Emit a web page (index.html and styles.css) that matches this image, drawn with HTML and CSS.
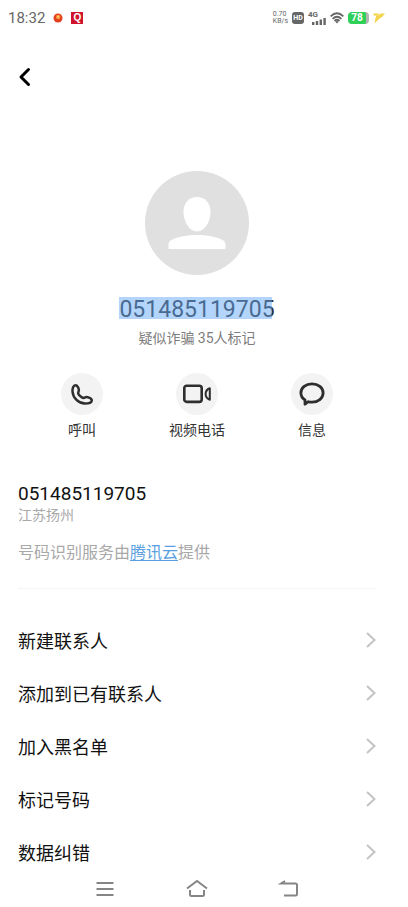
FILE: index.html
```html
<!DOCTYPE html>
<html lang="zh-CN">
<head>
<meta charset="utf-8">
<meta name="viewport" content="width=device-width, initial-scale=1">
<title>联系人详情</title>
<link rel="stylesheet" href="styles.css">
</head>
<body>
<header class="status">
  <div class="status-side">
    <time class="clock">18:32</time>
    <svg class="dot" width="10" height="10" viewBox="0 0 10 10" aria-hidden="true"><circle cx="5" cy="5" r="4.500" fill="#e2401f"/><circle cx="5.200" cy="4" r="2.200" fill="#f79a3b"/><circle cx="5" cy="3.800" r="1" fill="#ffd36b"/></svg>
    <span class="badge">Q</span>
  </div>
  <div class="status-side status-right">
    <span class="speed"><span>0.70</span><span>KB/s</span></span>
    <span class="hd">HD</span>
    <span class="cell"><span>4G</span>
      <svg width="14" height="7" viewBox="0 0 14 7" aria-hidden="true"><path d="M0 4h2.400v3H0zM3.800 3h2.400v4H3.800zM7.600 1.500H10V7H7.600zM11.400 0h2.400v7h-2.400z" fill="#666"/></svg>
    </span>
    <svg class="wifi" width="14" height="12" viewBox="0 0 14 12" aria-hidden="true"><g fill="none" stroke="#666" stroke-width="1.800"><path d="M.6 4.300Q7-1.800 13.400 4.300"/><path d="M2.600 6.800Q7 2.600 11.400 6.800"/><path d="M4.500 9Q7 6.600 9.500 9"/></g><path d="M5.300 9.700Q7 8.300 8.700 9.700L7 11.600z" fill="#666"/></svg>
    <span class="battery">78</span>
    <svg width="12" height="12" viewBox="0 0 12 12" aria-hidden="true"><path d="M.5 1.500h5.500L4.500 4 7.500 1.500H12L9.500 4.500 6 7 1.500 11.500 2.500 6 3.500 3.500H.5z" fill="#f3d44a"/></svg>
  </div>
</header>

<main class="page">
  <button class="back" type="button" aria-label="返回">
    <svg width="14" height="20" viewBox="0 0 14 20"><path d="M10.500 2.500L3 10l7.500 7.500" fill="none" stroke="#000" stroke-width="3" stroke-linecap="round" stroke-linejoin="round"/></svg>
  </button>

  <section class="profile">
    <svg class="avatar" width="104" height="104" viewBox="0 0 104 104" aria-hidden="true"><circle cx="52" cy="52" r="52" fill="#e0e0e0"/><path d="M52 26c8 0 13.500 6 13.500 15S60 60.500 52 60.500 38.500 50 38.500 41 44 26 52 26z" fill="#fff"/><path d="M23.500 78v-4c0-2.500 1-4 3-5 7-3.200 15-5 25.500-5s18.500 1.800 25.500 5c2 1 3 2.500 3 5v4z" fill="#fff"/></svg>
    <h1 class="name">051485119705</h1>
    <p class="mark">疑似诈骗 35人标记</p>
  </section>

  <nav class="actions">
    <button class="action" type="button">
      <span class="disc"><svg width="26" height="26" viewBox="0 0 26 26"><path d="M6.500 4.200C4.300 4.200 3.300 7.500 3.500 10.500 4 17 9.500 22.500 16 22.500c3.500 0 6.800-1 6.800-3.300 0-1.200-1.300-2-2.800-2.600s-2.700-.8-3.800-.2-2.200.8-3.500-.2-2.500-2-3.200-3-.4-1.800.1-2.800.3-2.200-.3-3.600S8 4.200 6.500 4.200z" fill="none" stroke="#2e2e2e" stroke-width="2.500" stroke-linejoin="round"/></svg></span>
      <span>呼叫</span>
    </button>
    <button class="action" type="button">
      <span class="disc"><svg width="28" height="20" viewBox="0 0 28 20"><rect x="1.300" y="1.700" width="17.400" height="16.200" rx="2.400" fill="none" stroke="#2e2e2e" stroke-width="2.600"/><path d="M26.800 4.200v11.600c-2.600-1-4.200-3.300-4.200-5.800s1.600-4.800 4.200-5.800z" fill="none" stroke="#2e2e2e" stroke-width="2" stroke-linejoin="round"/></svg></span>
      <span>视频电话</span>
    </button>
    <button class="action" type="button">
      <span class="disc"><svg width="26" height="24" viewBox="0 0 26 24"><path d="M6 22.200v-4.200C3.300 16.200 1.900 13.700 1.900 11 1.900 5.700 6.900 1.900 13 1.900s11.100 3.800 11.100 9.100-5 9.200-11.100 9.200c-1.300 0-2.500-.1-3.600-.5z" fill="none" stroke="#2e2e2e" stroke-width="2.800" stroke-linejoin="round"/></svg></span>
      <span>信息</span>
    </button>
  </nav>

  <section class="info">
    <p class="number">051485119705</p>
    <p class="place">江苏扬州</p>
    <p class="service">号码识别服务由<a href="#">腾讯云</a>提供</p>
  </section>

  <ul class="menu">
    <li><button class="row" type="button">新建联系人<svg class="chevron" width="10" height="16" viewBox="0 0 10 16"><path d="M1 1l7.500 7L1 15"/></svg></button></li>
    <li><button class="row" type="button">添加到已有联系人<svg class="chevron" width="10" height="16" viewBox="0 0 10 16"><path d="M1 1l7.500 7L1 15"/></svg></button></li>
    <li><button class="row" type="button">加入黑名单<svg class="chevron" width="10" height="16" viewBox="0 0 10 16"><path d="M1 1l7.500 7L1 15"/></svg></button></li>
    <li><button class="row" type="button">标记号码<svg class="chevron" width="10" height="16" viewBox="0 0 10 16"><path d="M1 1l7.500 7L1 15"/></svg></button></li>
    <li><button class="row" type="button">数据纠错<svg class="chevron" width="10" height="16" viewBox="0 0 10 16"><path d="M1 1l7.500 7L1 15"/></svg></button></li>
  </ul>
</main>

<footer class="system">
  <button type="button" aria-label="最近任务"><svg width="22" height="20" viewBox="0 0 22 20"><path d="M2.500 4h17M2.500 10h17M2.500 16h17"/></svg></button>
  <button type="button" aria-label="主屏幕"><svg width="22" height="20" viewBox="0 0 22 20"><path d="M1 9.500L11 2l10 7.500M4 11v4.500c0 1 .5 1.500 1.500 1.500h11c1 0 1.500-.5 1.500-1.500V11"/></svg></button>
  <button type="button" aria-label="返回上一级"><svg width="22" height="20" viewBox="0 0 22 20"><path d="M7 2L3 4.500h14.500c1 0 1.500.5 1.500 1.500v9c0 1-.5 1.500-1.500 1.500H6"/></svg></button>
</footer>
</body>
</html>
```
FILE: styles.css
```css
* {
  box-sizing: border-box;
}

body {
  margin: 0;
  padding-right: 15px;
  background: #fff;
  color: #111;
  font-family: Roboto, "Noto Sans CJK SC", sans-serif;
}

h1,
p,
ul {
  margin: 0;
  padding: 0;
  font-weight: 400;
}

button {
  padding: 0;
  border: 0;
  background: none;
  color: inherit;
  font: inherit;
  cursor: pointer;
}

svg {
  display: block;
}

.status {
  display: flex;
  justify-content: space-between;
  align-items: center;
  height: 36px;
  padding: 0 8px;
  color: #666;
}

.status-side {
  display: flex;
  align-items: center;
  gap: 8px;
}

.status-right {
  gap: 4px;
}

.clock {
  font-size: 15px;
}

.badge {
  width: 12px;
  height: 12px;
  background: #d0142c;
  color: #fff;
  font: 700 10px/12px "Liberation Sans", sans-serif;
  text-align: center;
}

.speed {
  display: flex;
  flex-direction: column;
  font-size: 7px;
  line-height: 7px;
}

.hd {
  width: 12px;
  height: 12px;
  border-radius: 3px;
  background: #666;
  color: #fff;
  font-size: 7px;
  font-weight: 700;
  line-height: 12px;
  text-align: center;
}

.cell {
  display: flex;
  flex-direction: column;
  width: 18px;
  font-size: 8px;
  font-weight: 700;
  line-height: 7px;
}

.cell svg {
  align-self: flex-end;
}

.battery {
  width: 21px;
  height: 12px;
  border-right: 3px solid #b5b5b5;
  border-radius: 4px;
  background: #2fd058;
  color: #fff;
  font-size: 10px;
  font-weight: 700;
  line-height: 12px;
  text-align: center;
}

.page {
  padding: 0 17px 0 18px;
}

.back {
  display: block;
  margin-top: 31px;
}

.profile {
  display: flex;
  flex-direction: column;
  align-items: center;
  margin-top: 84px;
}

.name {
  position: relative;
  margin-top: 22px;
  color: #333;
  font-size: 23px;
  line-height: 26px;
}

/* Text selection highlight over the number */
.name::after {
  content: "";
  position: absolute;
  inset: 0 3px 4px 0;
  background: rgba(98, 167, 247, 0.48);
}

.mark {
  margin-top: 5px;
  color: #7d7d7d;
  font-size: 14px;
  line-height: 20px;
}

.actions {
  display: flex;
  justify-content: center;
  margin-top: 25px;
}

.action {
  display: flex;
  flex: 0 1 115px;
  flex-direction: column;
  align-items: center;
  gap: 5px;
  color: #333;
  font-size: 14px;
  line-height: 20px;
}

.disc {
  display: grid;
  place-items: center;
  width: 42px;
  height: 42px;
  border-radius: 50%;
  background: #f3f3f3;
}

.info {
  margin-top: 42px;
  padding-bottom: 23px;
  border-bottom: 1px solid #f5f5f5;
  color: #a8a8a8;
}

.number {
  color: #111;
  font-size: 19px;
  line-height: 24px;
}

.place {
  font-size: 14px;
  line-height: 18px;
}

.service {
  margin-top: 17px;
  font-size: 16px;
  line-height: 24px;
}

.service a {
  color: #5b9fe0;
  text-underline-offset: 2px;
}

.menu {
  margin-top: 24px;
  list-style: none;
}

.row {
  display: flex;
  justify-content: space-between;
  align-items: center;
  width: 100%;
  height: 53px;
  font-size: 18px;
}

.chevron,
.system svg {
  fill: none;
  stroke: #c4c4c4;
  stroke-width: 2;
}

.system {
  display: flex;
  justify-content: center;
  gap: 70px;
  margin-top: 1px;
}

.system svg {
  stroke: #858585;
}
```
